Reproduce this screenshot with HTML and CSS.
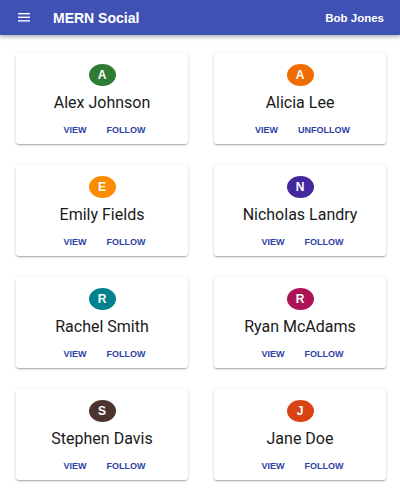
FILE: index.html
```html
<!DOCTYPE html>
<html>
<head>
<meta charset="utf-8">
<link rel="stylesheet" href="styles.css">
</head>
<body>
<header class="appbar">
  <svg class="menu" width="12" height="9" viewBox="0 0 12 9"><rect x="0" y="0" width="12" height="1.4" fill="#fff"/><rect x="0" y="3.6" width="12" height="1.4" fill="#fff"/><rect x="0" y="7.2" width="12" height="1.4" fill="#fff"/></svg>
  <span class="title">MERN Social</span>
  <span class="user">Bob Jones</span>
</header>
<main class="grid">
  <div class="card"><div class="avatar" style="background:#2e7d32">A</div><div class="name">Alex Johnson</div><div class="actions"><span>VIEW</span><span>FOLLOW</span></div></div>
  <div class="card"><div class="avatar" style="background:#ef6c00">A</div><div class="name">Alicia Lee</div><div class="actions"><span>VIEW</span><span>UNFOLLOW</span></div></div>
  <div class="card"><div class="avatar" style="background:#fb8c00">E</div><div class="name">Emily Fields</div><div class="actions"><span>VIEW</span><span>FOLLOW</span></div></div>
  <div class="card"><div class="avatar" style="background:#4527a0">N</div><div class="name">Nicholas Landry</div><div class="actions"><span>VIEW</span><span>FOLLOW</span></div></div>
  <div class="card"><div class="avatar" style="background:#00838f">R</div><div class="name">Rachel Smith</div><div class="actions"><span>VIEW</span><span>FOLLOW</span></div></div>
  <div class="card"><div class="avatar" style="background:#ad1457">R</div><div class="name">Ryan McAdams</div><div class="actions"><span>VIEW</span><span>FOLLOW</span></div></div>
  <div class="card"><div class="avatar" style="background:#4e342e">S</div><div class="name">Stephen Davis</div><div class="actions"><span>VIEW</span><span>FOLLOW</span></div></div>
  <div class="card"><div class="avatar" style="background:#d84315">J</div><div class="name">Jane Doe</div><div class="actions"><span>VIEW</span><span>FOLLOW</span></div></div>
</main>
</body>
</html>
```
FILE: styles.css
```css
* { box-sizing: border-box; }
html, body { margin: 0; padding: 0; background: #fff; }
body { width: 400px; height: 500px; overflow: hidden; font-family: Roboto, "Liberation Sans", sans-serif; }
.appbar {
  height: 35px;
  background: #3f51b5;
  color: #fff;
  display: flex;
  align-items: center;
  padding: 0 16px 0 18px;
  box-shadow: 0 2px 4px rgba(0,0,0,0.3);
  position: relative;
  z-index: 1;
}
.menu { display: block; margin-right: 23px; }
.title { font-family: "Liberation Sans", Arial, sans-serif; font-weight: bold; font-size: 14px; flex: 1; }
.user { font-family: "Liberation Sans", Arial, sans-serif; font-weight: bold; font-size: 11.5px; }
.grid {
  display: grid;
  grid-template-columns: 172px 172px;
  column-gap: 26px;
  row-gap: 21px;
  padding: 18px 15px 0 16px;
}
.card {
  height: 91px;
  background: #fff;
  border-radius: 3px;
  box-shadow: 0 1px 3px rgba(0,0,0,0.22), 0 1px 1px rgba(0,0,0,0.1), 0 2px 1px -1px rgba(0,0,0,0.08);
  display: flex;
  flex-direction: column;
  align-items: center;
  padding-top: 11px;
}
.avatar {
  width: 27px;
  height: 22px;
  border-radius: 50%;
  color: #fff;
  font-size: 12px;
  font-weight: bold;
  display: flex;
  align-items: center;
  justify-content: center;
  font-family: "Liberation Sans", Arial, sans-serif;
}
.name {
  margin-top: 7px;
  font-size: 16px;
  color: #1a1a1a;
  line-height: 20px;
}
.actions {
  margin-top: 12px;
  padding-left: 5px;
  display: flex;
  gap: 20px;
  font-family: "Liberation Sans", Arial, sans-serif;
  font-weight: bold;
  font-size: 9px;
  color: #2d3fa6;
}
```
